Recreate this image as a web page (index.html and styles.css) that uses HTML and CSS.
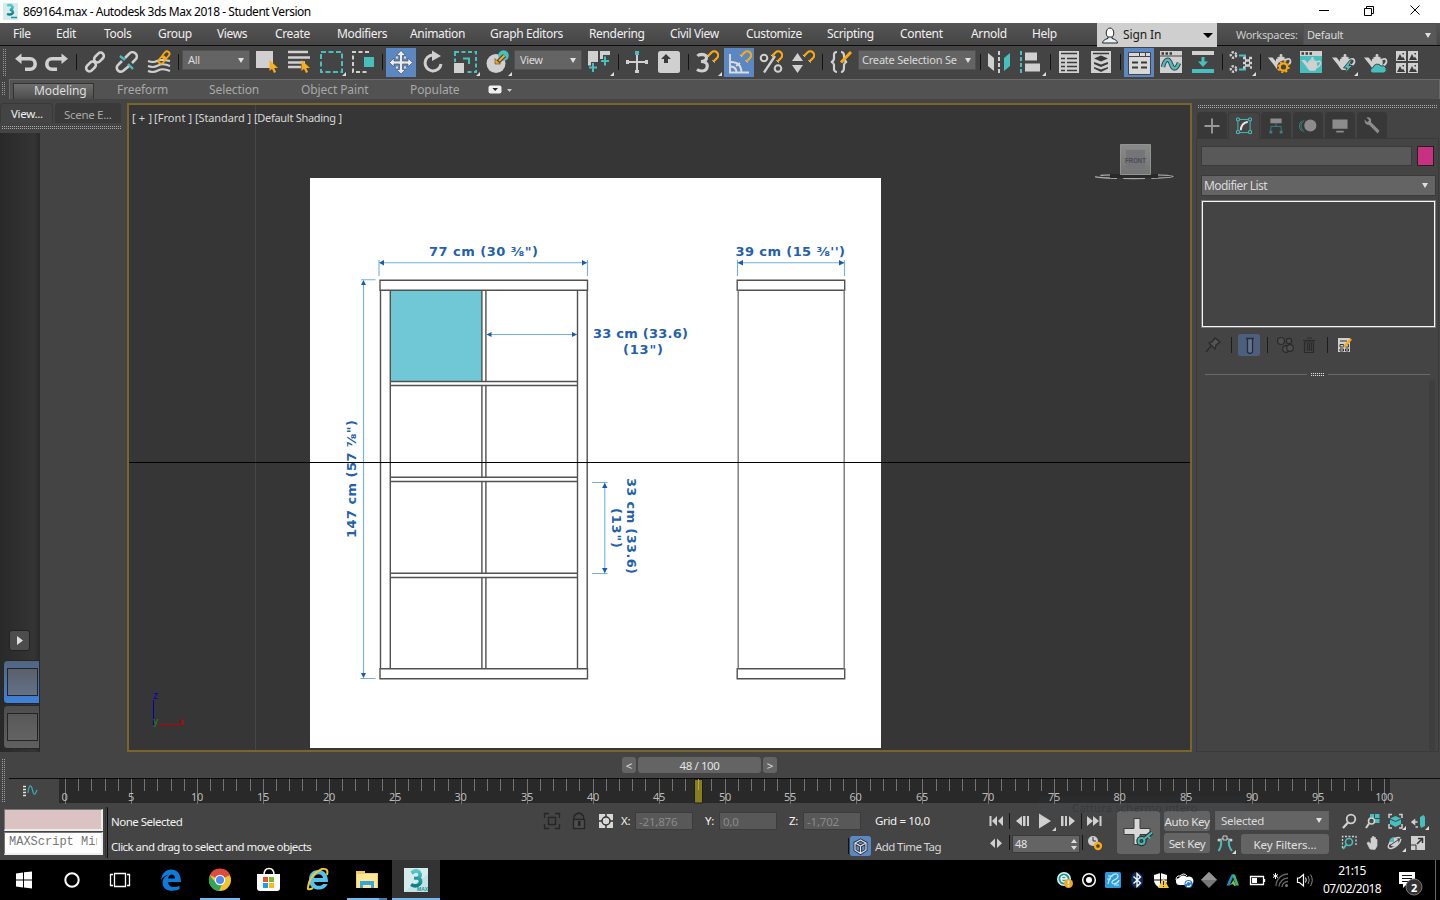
FILE: index.html
```html
<!DOCTYPE html>
<html lang="en">
<head>
<meta charset="utf-8">
<title>869164.max - Autodesk 3ds Max 2018 - Student Version</title>
<link rel="stylesheet" href="styles.css">
</head>
<body>
<svg class="defs" width="0" height="0">
  <defs>
    <linearGradient id="dteal" x1="0" y1="0" x2="0" y2="1"><stop offset="0" stop-color="#56c8cc"/><stop offset="1" stop-color="#0b7f86"/></linearGradient>
    <linearGradient id="cube" x1="0" y1="0" x2="0" y2="1"><stop offset="0" stop-color="#8a8a8a"/><stop offset="1" stop-color="#747474"/></linearGradient>
    <symbol id="max3" viewBox="0 0 24 24"><rect width="24" height="24" fill="#d6ecec"/><path d="M0 24L24 6V24Z" fill="#c2e2e3"/><path d="M7.500 5Q12 1.500 15 4Q17.500 7.500 14.500 10Q18 12.500 15.500 16Q12 19.500 7 16.500" fill="none" stroke="url(#dteal)" stroke-width="3.600"/><path d="M10 10.200H14" stroke="#1d9aa0" stroke-width="3"/><text x="13" y="23" class="maxtag">MAX</text></symbol>
    <symbol id="cursor" viewBox="0 0 9 13"><path d="M.5 0V11L3 8.800L5 13L7 12L5.200 8H9Z" fill="#fbae1c"/></symbol>
    <symbol id="magnet" viewBox="0 0 13 13"><path d="M2 6L5.500 2.500A3.800 3.800 0 0 1 11 8L7.500 11.500" fill="none" stroke="#fba90f" stroke-width="2.200"/><path d="M.8 4.800L3.200 7.200M6.300 10.300L8.700 12.700" stroke="#e8c27a" stroke-width="1"/></symbol>
    <symbol id="pot" viewBox="0 0 24 18"><path d="M0 3.500H4.500L8 7.500V5Q13 2.500 18 5Q20 10 16.500 16H10Q8 14.500 6 11Z" fill="#d0d0d0"/><path d="M8.500 4Q13 .5 17.500 4Z" fill="#d0d0d0"/><circle cx="13" cy="1.500" r="1.400" fill="#d0d0d0"/><path d="M18 5.500Q22.500 3.500 22.500 7.500Q22 11 17 12.500" fill="none" stroke="#d0d0d0" stroke-width="1.800"/></symbol>
    <symbol id="pic" viewBox="0 0 10 10"><rect width="10" height="10" fill="#d0d0d0"/><path d="M1 9L4 3L6 7L7 5.500L9 9Z" fill="#3a3a3a"/><rect x="6.500" y="2" width="1.500" height="1.500" fill="#3a3a3a"/></symbol>
  </defs>
</svg>

<header class="title">
  <svg class="app-ico" width="15" height="17" viewBox="0 0 15 17"><rect width="15" height="17" fill="#d6ecec"/><path d="M4 2.500Q8 1 9.500 3.500Q10 6 7 6.800Q10.500 7.500 9.800 10Q8 12.500 4 11" fill="none" stroke="url(#dteal)" stroke-width="2.400"/><path d="M8 14.500H14" stroke="#119ca3" stroke-width="1.500"/></svg>
  <span class="title-text">869164.max - Autodesk 3ds Max 2018 - Student Version</span>
  <svg class="win-btns" width="110" height="20" viewBox="1315 0 110 20" fill="none" stroke="#000"><path d="M1319 10.500H1329M1364.500 8.500H1371.500V15.500H1364.500ZM1366.500 8V6.500H1373.500V13.500H1372M1410.500 5.500L1419.500 14.500M1419.500 5.500L1410.500 14.500"/></svg>
</header>

<nav class="menu">
  <span>File</span><span>Edit</span><span>Tools</span><span>Group</span><span>Views</span><span>Create</span><span>Modifiers</span><span>Animation</span><span>Graph Editors</span><span>Rendering</span><span>Civil View</span><span>Customize</span><span>Scripting</span><span>Content</span><span>Arnold</span><span>Help</span>
  <div class="signin">
    <svg width="16" height="17" viewBox="0 0 16 17"><ellipse cx="8" cy="6" rx="3.800" ry="5" fill="#fff" stroke="#222"/><path d="M.5 16Q1 12.500 6 11.500V10H10V11.500Q15 12.500 15.500 16Z" fill="#e6f0f5" stroke="#222"/></svg>
    <b>Sign In</b>
    <svg width="10" height="5" viewBox="0 0 10 5"><path d="M0 0H10L5 5Z"/></svg>
  </div>
  <div class="ws"><span>Workspaces:</span><div class="combo ws-combo">Default<i></i></div></div>
</nav>

<div class="toolbar">
  <div class="grip"></div>
  <svg class="ic" viewBox="0 0 32 32"><path d="M12.500 7.500V18L6 12.800Z" fill="#d0d0d0"/><path d="M11 12.800H21A5.200 5.200 0 0 1 21 23.200H16" fill="none" stroke="#d0d0d0" stroke-width="3.600"/></svg>
  <svg class="ic" viewBox="0 0 32 32"><path d="M20.500 7.500V18L27 12.800Z" fill="#d0d0d0"/><path d="M22 12.800H11A5.200 5.200 0 0 0 11 23.200H16" fill="none" stroke="#d0d0d0" stroke-width="3.600"/></svg>
  <u></u>
  <svg class="ic" viewBox="0 0 32 32"><g fill="none" stroke="#d0d0d0" stroke-width="2.600"><rect x="-5.500" y="-3.300" width="11" height="6.600" rx="3.300" transform="translate(20 11.500) rotate(-45)"/><rect x="-5.500" y="-3.300" width="11" height="6.600" rx="3.300" transform="translate(12 20.500) rotate(-45)"/></g></svg>
  <svg class="ic" viewBox="0 0 32 32"><path d="M14 12L18 8A3.500 3.500 0 0 1 25 13L21 17M11 15L7.500 18.500A3.500 3.500 0 0 0 12 25L18 20" fill="none" stroke="#d0d0d0" stroke-width="2.600"/><path d="M9 10L14 14M17 18L22 23" stroke="#46c0be" stroke-width="2.400"/></svg>
  <svg class="ic" viewBox="0 0 32 32"><path d="M5 15Q10 17 14 15T27 15M5 20Q10 22 15 19.500T27 20M5 25Q10 27 15 24.500T27 25" fill="none" stroke="#d0d0d0" stroke-width="2"/><g fill="none" stroke="#fba90f" stroke-width="1.800"><rect x="-4" y="-2.500" width="8" height="5" rx="2.500" transform="translate(23 9) rotate(-50)"/><rect x="-4" y="-2.500" width="8" height="5" rx="2.500" transform="translate(19 14) rotate(-50)"/></g></svg>
  <u></u>
  <div class="combo c1">All<i></i></div>
  <svg class="ic" viewBox="0 0 32 32"><rect x="5" y="5" width="17" height="17" fill="#d0d0d0"/><use href="#cursor" x="18" y="14" width="9" height="13"/></svg>
  <svg class="ic" viewBox="0 0 32 32"><path d="M5 6H25M5 11.500H27M5 16.500H22M5 21H18" stroke="#d0d0d0" stroke-width="2.300"/><use href="#cursor" x="18" y="14" width="9" height="13"/></svg>
  <svg class="ic" viewBox="0 0 32 32"><rect x="6" y="6" width="21" height="20" fill="none" stroke="#46c0be" stroke-width="2" stroke-dasharray="5 2.500"/><path d="M31 26V30H27Z" fill="#ddd"/></svg>
  <svg class="ic" viewBox="0 0 32 32"><path d="M22 6H6V26H22" fill="none" stroke="#d0d0d0" stroke-width="2" stroke-dasharray="4 2.500"/><path d="M17 11H27V21H17Z" fill="#46c0be"/></svg>
  <u></u>
  <svg class="ic on" viewBox="0 0 32 32"><path d="M16 4.500L20.500 9.500H17.500V15H23V12L27.500 16.500L23 21V18H17.500V23.500H20.500L16 28L11.500 23.500H14.500V18H9V21L4.500 16.500L9 12V15H14.500V9.500H11.500Z" fill="#ececec" stroke="#4a5260" stroke-width=".7"/><path d="M11 11.500H13M19 11.500H21M11 21.500H13M19 21.500H21" stroke="#ddd" stroke-width="2"/></svg>
  <svg class="ic" viewBox="0 0 32 32"><path d="M16 9A8 8 0 1 0 24 18" fill="none" stroke="#d0d0d0" stroke-width="3"/><path d="M15 4.500L24 10L15 15Z" fill="#d0d0d0"/></svg>
  <svg class="ic" viewBox="0 0 32 32"><rect x="6" y="6" width="21" height="20" fill="none" stroke="#46c0be" stroke-width="2" stroke-dasharray="4 2.500"/><path d="M4 16H16V28H4Z" fill="#444"/><path d="M5 17H15V27H5Z" fill="#d0d0d0"/><path d="M14 12.500H20V18" fill="none" stroke="#46c0be" stroke-width="2"/><path d="M31 26V30H27Z" fill="#ddd"/></svg>
  <svg class="ic" viewBox="0 0 32 32"><circle cx="15" cy="17.500" r="9.500" fill="#d0d0d0"/><circle cx="22.500" cy="9.500" r="5.300" fill="#46c0be"/><path d="M23.500 9.500L17 16" stroke="#444" stroke-width="4.500"/><path d="M23.500 9.500L18 15" stroke="#fba90f" stroke-width="2.200"/><path d="M14 18V12.500L19.500 18Z" fill="#fba90f" stroke="#444" stroke-width=".6"/><path d="M31 26V30H27Z" fill="#ddd"/></svg>
  <div class="combo c1 c1b">View<i></i></div>
  <svg class="ic" viewBox="0 0 32 32"><path d="M4 5H14V16H9L8 21H4ZM16 5H26V9H19V15H16Z" fill="#d0d0d0"/><path d="M9 16V27M4 21.500H14M21 9.500V20.500M16 15H26" stroke="#444" stroke-width="4"/><path d="M9 17V26M5 21.500H13M21 10.500V19.500M17 15H25" stroke="#46c0be" stroke-width="2"/><path d="M30 26V30H26Z" fill="#ddd"/></svg>
  <u class="s5"></u>
  <svg class="ic" viewBox="0 0 32 32"><path d="M5 16H27M16 9V27" stroke="#d0d0d0" stroke-width="2"/><path d="M6.500 14V18M25.500 14V18M14 25.500H18" stroke="#d0d0d0" stroke-width="3"/><path d="M14 5H18V9H14Z" fill="#46c0be"/></svg>
  <svg class="ic" viewBox="0 0 32 32"><rect x="5" y="5" width="22" height="22" rx="2.500" fill="#d0d0d0"/><path d="M13 8L18 13H15V17H11V13H8Z" fill="#3a3a3a"/></svg>
  <u></u>
  <svg class="ic" viewBox="0 0 32 32"><path d="M6.500 10Q8 8.300 11 8.300Q15.500 8.500 15.500 11.800Q15.300 15.300 10 15.500Q16.500 15.700 16.300 20Q16 24.800 11 25Q8 25 6 23.500" fill="none" stroke="#d0d0d0" stroke-width="3.200"/><use href="#magnet" x="15" y="4" width="13" height="13"/><path d="M31 26V30H27Z" fill="#ddd"/></svg>
  <svg class="ic on" viewBox="0 0 32 32"><path d="M7 8V26.500H26M8 16Q18 16 18.500 26M8 20.500Q13 21 13.500 26M13 20L17 17" fill="none" stroke="#dcdcdc" stroke-width="1.900"/><use href="#magnet" x="16" y="4" width="13" height="13"/></svg>
  <svg class="ic" viewBox="0 0 32 32"><circle cx="9" cy="12" r="3.300" fill="none" stroke="#d0d0d0" stroke-width="2"/><circle cx="23" cy="22.500" r="3.300" fill="none" stroke="#d0d0d0" stroke-width="2"/><path d="M20 10L9 26.500" stroke="#d0d0d0" stroke-width="2.300"/><use href="#magnet" x="15" y="4" width="13" height="13"/></svg>
  <svg class="ic" viewBox="0 0 32 32"><path d="M5 15L10.500 7L16 15ZM5 19L10.500 27L16 19Z" fill="#d0d0d0"/><use href="#magnet" x="15" y="4" width="13" height="13"/></svg>
  <u></u>
  <svg class="ic br" viewBox="0 0 32 32"><path d="M11 6Q7.500 6 8 10Q8.500 15.500 5 16Q8.500 16.500 8 21Q7.500 26 11 26M15 6Q18 6 18 10Q18 15.500 21 16Q17.500 16.500 18 21Q18 26 15 26" fill="none" stroke="#d0d0d0" stroke-width="2.200"/><path d="M25 6L15 16.500" stroke="#fba90f" stroke-width="3"/></svg>
  <div class="combo c2">Create Selection Se<i></i></div>
  <u></u>
  <svg class="ic" viewBox="0 0 32 32"><path d="M5 7L11 12V25L5 20Z" fill="#d0d0d0"/><path d="M27 7L21 12V25L27 20Z" fill="#46c0be"/><path d="M16 5V28" stroke="#d0d0d0" stroke-width="2" stroke-dasharray="4 2"/></svg>
  <svg class="ic" viewBox="0 0 32 32"><path d="M6 5V27" stroke="#46c0be" stroke-width="2" stroke-dasharray="4 2"/><path d="M10 6.500H22V14.500H10ZM10 17.500H25V25.500H10Z" fill="#d0d0d0"/><path d="M31 26V30H27Z" fill="#ddd"/></svg>
  <u></u>
  <svg class="ic" viewBox="0 0 32 32"><path d="M6 5H26V27H6Z" fill="#d0d0d0"/><path d="M8 7.500H24M8 12.500H12M14 12.500H24M8 16.500H12M14 16.500H24M8 20.500H12M14 20.500H24M8 24.500H12M14 24.500H24" stroke="#3a3a3a" stroke-width="1.700"/></svg>
  <svg class="ic" viewBox="0 0 32 32"><path d="M6 5H26V27H6Z" fill="#d0d0d0"/><path d="M8 7.500H24" stroke="#3a3a3a" stroke-width="1.500"/><path d="M9 12.500L16 9.500L23 12.500L16 15.500ZM9 16L16 18.500L23 16V18L16 21L9 18ZM9 21L16 23.500L23 21V22.500L16 26L9 22.500Z" fill="#3a3a3a"/></svg>
  <u></u>
  <svg class="ic on" viewBox="0 0 32 32"><path d="M5.500 6.500H27.500V28.500H5.500Z" fill="#d8d8d8" stroke="#444"/><path d="M5.500 10.500H16.500V6.500M16.500 10.500H27.500M22.500 6.500V10.500" fill="none" stroke="#444"/><path d="M9 16.500H15M18 16.500H24M9 21.500H15M18 21.500H24" stroke="#3a3a3a" stroke-width="2"/></svg>
  <svg class="ic" viewBox="0 0 32 32"><path d="M5 5H27V27H5Z" fill="#d0d0d0"/><path d="M5 10H27" stroke="#444"/><path d="M6.500 7.500H17" stroke="#3a3a3a" stroke-width="2.500" stroke-dasharray="2.500 1.500"/><path d="M8 21C10 12 14 12 16 18S21 24 24 17" fill="none" stroke="#444" stroke-width="4.500"/><path d="M8 21C10 12 14 12 16 18S21 24 24 17" fill="none" stroke="#46c0be" stroke-width="2.500"/></svg>
  <svg class="ic" viewBox="0 0 32 32"><path d="M5 5H27V9H5Z" fill="#d0d0d0"/><path d="M5 23H27V27H5ZM14.500 11H17.500V15.500H21L16 21L11 15.500H14.500Z" fill="#46c0be"/></svg>
  <u></u>
  <svg class="ic" viewBox="0 0 32 32"><path d="M14 9.500H20V12M14 23.500H20V20" fill="none" stroke="#46c0be" stroke-width="2"/><g fill="none" stroke="#d0d0d0" stroke-width="2.400"><circle cx="8.500" cy="9" r="2.700" stroke-dasharray="2.200 1.300"/><circle cx="8.500" cy="23" r="2.700" stroke-dasharray="2.200 1.300"/><path d="M18 12H21M24 12H27M20 14.500H25M18 17H21M24 17H27M20 19.500H25M18 21.500H20M25 21.500H27"/></g><path d="M31 26V30H27Z" fill="#ddd"/></svg>
  <u></u>
  <svg class="ic" viewBox="0 0 32 32"><use href="#pot" x="5" y="8" width="24" height="18"/><circle cx="20.500" cy="21" r="6.500" fill="#444"/><circle cx="20.500" cy="21" r="3.700" fill="none" stroke="#fba90f" stroke-width="2.200"/><circle cx="20.500" cy="21" r="5.400" fill="none" stroke="#fba90f" stroke-width="1.500" stroke-dasharray="2.100 2.100"/></svg>
  <svg class="ic" viewBox="0 0 32 32"><path d="M5 5H27V27H5Z" fill="#46c0be"/><path d="M5 5H27V10H5Z" fill="#d0d0d0"/><path d="M6.500 7.500H17" stroke="#3a3a3a" stroke-width="2.500" stroke-dasharray="2.500 1.500"/><use href="#pot" x="6" y="11" width="21" height="15.500"/></svg>
  <svg class="ic" viewBox="0 0 32 32"><use href="#pot" x="5" y="8" width="24" height="18"/><path d="M23 14L16.500 22H20L17.500 28L25.500 19.500H22L25 14Z" fill="#46c0be" stroke="#444"/><path d="M31 26V30H27Z" fill="#ddd"/></svg>
  <svg class="ic" viewBox="0 0 32 32"><use href="#pot" x="5" y="8" width="24" height="18"/><path d="M13 27A3 3 0 0 1 14 21.500A4.500 4.500 0 0 1 22 20A3.500 3.500 0 0 1 25 27Z" fill="#46c0be" stroke="#444"/></svg>
  <svg class="ic" viewBox="0 0 32 32"><use href="#pic" x="5" y="5" width="10" height="10"/><use href="#pic" x="17" y="5" width="10" height="10"/><use href="#pic" x="5" y="17" width="10" height="10"/><use href="#pic" x="17" y="17" width="10" height="10"/></svg>
</div>

<div class="ribbon">
  <div class="grip rg"></div>
  <div class="rib">
    <span class="act">Modeling</span><span class="r2">Freeform</span><span class="r3">Selection</span><span class="r4">Object Paint</span><span class="r5">Populate</span>
    <svg width="26" height="10" viewBox="0 0 26 10"><rect x=".5" y=".5" width="13" height="8" rx="2" fill="#eee"/><path d="M4.500 3H10L7.200 6Z" fill="#222"/><path d="M19 4H24L21.500 7Z" fill="#ccc"/></svg>
  </div>
</div>

<main class="main">
  <aside class="left">
    <div class="ltabs"><span class="lt on1">View...</span><span class="lt">Scene E...</span></div>
    <div class="dots"></div>
    <div class="strip">
      <div class="play"><svg width="6" height="9" viewBox="0 0 6 9"><path d="M0 0L6 4.500L0 9Z" fill="#ddd"/></svg></div>
      <div class="vp blue"><div></div></div>
      <div class="vp"><div></div></div>
    </div>
  </aside>

  <section class="view">
    <svg width="1061" height="645" viewBox="129 105 1061 645">
      <path d="M255.500 105V750" stroke="#464646"/>
      <g class="vlabel"><text x="132" y="122" textLength="20">[ + ]</text><text x="154" y="122" textLength="38">[Front ]</text><text x="195" y="122" textLength="56">[Standard ]</text><text x="254" y="122" textLength="88">[Default Shading ]</text></g>
      <rect x="310" y="178" width="571" height="570" fill="#fff"/>
      <rect x="390" y="290" width="92" height="91" fill="#70c7d6"/>
      <g fill="none" stroke="#515151" stroke-width="1.400">
        <path d="M380 280.300H587.500V290.300H380ZM380 668.800H587.500V678.700H380ZM380.500 290V669M390.300 290V669M577.500 290V669M587.200 290V669"/>
        <path d="M390 381.500H577.500M390 385.500H577.500M390 477.300H577.500M390 481.500H577.500M390 573.300H577.500M390 577.500H577.500M481.900 290V381M485.900 290V381M481.900 386V477M485.900 386V477M481.900 482V573M485.900 482V573M481.900 578V669M485.900 578V669"/>
        <path d="M737.200 280.300H844.700V290.300H737.200ZM737.200 668.800H844.700V678.700H737.200Z"/>
        <path d="M738.200 290V669M844.200 290V669" stroke="#777"/>
      </g>
      <path d="M379 260V276M587.500 260V276M380 262.800H587M361 279.800H375.500M360.500 678.500H375.500M363.500 281V677M487 334.500H577M592 482.500H607.500M592 573.500H607.500M604.800 483V573M737.500 260V276M844.500 260V276M738 262.800H844" stroke="#75b0dc" stroke-width="1.100"/>
      <path d="M379 262.800L384 260V265.500ZM587 262.800L582 260V265.500ZM363.500 280L361 285H366ZM363.500 678L361 673H366ZM486.500 334.500L491.500 332V337ZM577 334.500L572 332V337ZM604.800 483L602 488H607.500ZM604.800 573L602 568H607.500ZM737.500 262.800L743 260V265.500ZM844.500 262.800L839 260V265.500Z" fill="#1a5cab"/>
      <g class="dim">
        <text x="429" y="256" textLength="109">77 cm (30 ⅜")</text>
        <text x="735.500" y="256" textLength="109.500">39 cm (15 ⅜'')</text>
        <text x="593" y="338" textLength="95">33 cm (33.6)</text>
        <text x="623" y="353.500" textLength="40">(13")</text>
        <text transform="translate(356 538) rotate(-90)" textLength="118">147 cm (57 ⅞")</text>
        <text transform="translate(627 478) rotate(90)" textLength="96">33 cm (33.6)</text>
        <text transform="translate(611.500 508) rotate(90)" textLength="40">(13")</text>
      </g>
      <path d="M129 462.500H1190" stroke="#000"/>
      <path d="M153.500 700V725" stroke="#0000b4"/><path d="M158 724.500H182" stroke="#c00000"/>
      <text x="153" y="699" class="ax" fill="#0000c8">z</text><text x="153" y="725" class="ax" fill="#1a8f1a">y</text><text x="179" y="725" class="ax" fill="#c00000">x</text>
      <ellipse cx="1134" cy="176.500" rx="39" ry="2" fill="none" stroke="#a5a8ad" stroke-width="1.300" stroke-dasharray="22 6"/>
      <rect x="1110" y="174" width="48" height="4" fill="#292929"/>
      <path d="M1120.500 144.500H1150.500V174.500H1120.500Z" fill="url(#cube)" stroke="#929292"/><rect x="1126" y="150" width="19" height="19" fill="#737578"/>
      <text x="1125" y="163" textLength="21" lengthAdjust="spacingAndGlyphs" class="cubet">FRONT</text>
    </svg>
  </section>

  <aside class="right">
    <div class="dots rd"></div>
    <div class="tabs">
      <svg viewBox="0 0 32 27"><path d="M8 14H24M16 6V22" stroke="#9a9a9a" stroke-width="2"/></svg>
      <svg class="cur" viewBox="0 0 32 27"><path d="M9.500 6.500H22.500V20.500H9.500Z" fill="none" stroke="#46c0be"/><path d="M8 5h3v3h-3zM21 5h3v3h-3zM8 18.500h3v3h-3zM21 18.500h3v3h-3z" fill="#444" stroke="#46c0be"/><path d="M12.500 18Q13 10.500 20 9" fill="none" stroke="#e5e5e5" stroke-width="2"/></svg>
      <svg viewBox="0 0 32 27"><path d="M10 6H22V11H10Z" fill="#8c8c8c"/><path d="M16 11V14M10.500 19V14.500H21.500V19" fill="none" stroke="#3b8282"/><path d="M9 19H12V22H9ZM20 19H23V22H20Z" fill="#3b8282"/></svg>
      <svg viewBox="0 0 32 27"><path d="M12 8A7 7 0 0 0 12 20M9.500 8.500A7 7 0 0 0 9.500 19.500" fill="none" stroke="#3b8282"/><circle cx="18.500" cy="13.500" r="6.500" fill="#8c8c8c"/></svg>
      <svg viewBox="0 0 32 27"><path d="M8 7H24V17H8ZM12 19H20V21H12Z" fill="#8c8c8c"/></svg>
      <svg viewBox="0 0 32 27"><path d="M8 7L11 10L13 8L10 5Q14 4 15 7L15 10L24 19L22 22L13 13Q8 13 8 7Z" fill="#8c8c8c"/></svg>
    </div>
    <div class="panel">
      <div class="nm"><div class="name"></div><div class="swatch"></div></div>
      <div class="combo mod">Modifier List<i></i></div>
      <div class="stack"></div>
      <svg class="modicons" width="230" height="24" viewBox="1201 333 230 24"><g fill="none" stroke="#2a2a2a" stroke-width="1.300"><path d="M1206 352L1211 346M1209 343L1215 349L1216 345L1220 342L1215 338L1212 342Z" fill="#555"/></g><path d="M1231.500 337V353M1267.500 337V353M1327.500 337V353" stroke="#1c1c1c"/><rect x="1238" y="334" width="22" height="22" rx="2.500" fill="#4d5f7d"/><path d="M1246 338.500H1254M1247.500 339V352Q1250 355 1252.500 352V339" fill="#64748c" stroke="#262c35" stroke-width="1.300"/><g fill="#4e4e4e" stroke="#2a2a2a" stroke-width="1.200"><circle cx="1281" cy="341" r="3.500"/><circle cx="1289" cy="341" r="2.700"/><circle cx="1286" cy="349" r="3.300"/><circle cx="1290" cy="348" r="3.300"/><path d="M1304.500 342H1313.500V352.500H1304.500ZM1303 340.500H1315.500M1307 338H1312M1307.500 343V351M1309.500 343V351M1311.500 343V351" fill="none"/></g><path d="M1338 338H1350V352H1338Z" fill="#d0d0d0"/><path d="M1340 341H1347M1340 344.500H1343.500V347H1340ZM1345.500 344.500H1348.500V347H1345.500ZM1340 349H1343.500V351H1340ZM1345.500 349H1348.500V351H1345.500Z" fill="none" stroke="#333"/><path d="M1351 339L1344 347" stroke="#fba90f" stroke-width="2.500"/></svg>
      <div class="divide"><s></s><em></em><s></s></div>
      <div class="thumb"></div>
    </div>
  </aside>
</main>

<div class="slider"><div class="sb">&lt;</div><div class="sv">48 / 100</div><div class="sb">&gt;</div></div>

<div class="track">
  <svg width="1440" height="53" viewBox="0 751 1440 53">
    <path d="M4.500 759V802M2.500 759V802" stroke="#a0a0a0" stroke-dasharray="1 1"/>
    <path d="M59 779H1390V803H59Z" fill="#292929"/><path d="M9 778.500H1440" stroke="#0c0c0c"/>
    <path d="M23 786.500H26M23 789.500H26M23 792.500H26M23 795.500H26" stroke="#ddd" stroke-width="1.300"/><path d="M28 793C29 784 31 784 32.500 790S35 795 37 790" fill="none" stroke="#3aa9a8" stroke-width="1.300"/>
    <g shape-rendering="crispEdges" fill="none" stroke="#747474"><path d="M65 785H1385" stroke-width="12" stroke-dasharray="1 12.190"/><path d="M65 791.500H1385" stroke-width="25" stroke-dasharray="1 64.950"/></g>
    <g class="nums"><text x="64.500" y="801">0</text><text x="131" y="801">5</text><text x="197" y="801">10</text><text x="263" y="801">15</text><text x="329" y="801">20</text><text x="395" y="801">25</text><text x="460.500" y="801">30</text><text x="527" y="801">35</text><text x="593" y="801">40</text><text x="659" y="801">45</text><text x="725" y="801">50</text><text x="790" y="801">55</text><text x="855.500" y="801">60</text><text x="922" y="801">65</text><text x="988" y="801">70</text><text x="1054" y="801">75</text><text x="1119.500" y="801">80</text><text x="1186" y="801">85</text><text x="1252" y="801">90</text><text x="1318" y="801">95</text><text x="1384" y="801">100</text></g>
    <path d="M694.500 779.500H702.500V803H694.500Z" fill="#857d1f" stroke="#1f1f1f"/><path d="M698.500 779V790" stroke="#b3a836"/>
  </svg>
</div>

<div class="status">
  <div class="script"><div class="pink"></div><div class="listener"><span>MAXScript Mini</span></div></div>
  <div class="vline"></div>
  <div class="msg"><span class="none">None Selected</span><span class="hint">Click and drag to select and move objects</span></div>
  <div class="coords">
    <div class="row">
      <svg width="73" height="20" viewBox="542 811 73 20"><g fill="none" stroke="#252525" stroke-width="1.300"><path d="M548.500 817.500H555.500V824.500H548.500ZM544.500 818V813.500H549M555 813.500H559.500V818M559.500 824V828.500H555M549 828.500H544.500V824"/><path d="M574 820V816Q579 810 583.500 816V820"/><rect x="573.500" y="819.500" width="11" height="9" fill="#4e4e4e"/></g><path d="M578 821H580.500V826H578Z" fill="#222"/><path d="M599 814H613V828H599Z" fill="#d8d8d8"/><circle cx="606" cy="821" r="4" fill="none" stroke="#333" stroke-width="1.500"/><path d="M606 814V817M606 825V828M599 821H602M610 821H613" stroke="#333" stroke-width="1.500"/></svg>
      <span class="ax1">X:</span><div class="fld">-21,876</div><span class="ax2">Y:</span><div class="fld">0,0</div><span class="ax2">Z:</span><div class="fld">-1,702</div><span class="grid10">Grid = 10,0</span>
    </div>
    <div class="row row2">
      <svg width="24" height="22" viewBox="848 835 24 22"><path d="M848.500 838V854" stroke="#111"/><rect x="850" y="836" width="21" height="20" rx="2.500" fill="#5b87c3"/><path d="M860.500 840L866 843V850L860.500 853.500L855 850V843ZM855 843L860.500 846L866 843M860.500 846V853" fill="none" stroke="#2b3440" stroke-width="3"/><path d="M860.500 840L866 843V850L860.500 853.500L855 850V843ZM855 843L860.500 846L866 843M860.500 846V853" fill="none" stroke="#e0e0e0" stroke-width="1.200"/></svg>
      <span class="att">Add Time Tag</span>
    </div>
  </div>
  <div class="playback">
    <svg width="118" height="27" viewBox="986 806 118 27" fill="#d0d0d0"><path d="M989.500 816H991.500V826H989.500ZM997 816V826L992 821ZM1003 816V826L998 821ZM1022 816V826L1016 821ZM1023 816H1025.500V826H1023ZM1027 816H1029V826H1027ZM1039 813.500L1051 821L1039 828.500ZM1061 816H1063.500V826H1061ZM1065 816H1067V826H1065ZM1069 816L1075 821L1069 826ZM1087 816L1093 821L1087 826ZM1093 816L1099 821L1093 826ZM1099.500 816H1101.500V826H1099.500ZM1056 827V831H1052Z"/><path d="M1009.500 813V829M1081.500 813V829" stroke="#161616"/></svg>
    <div class="prow"><svg width="26" height="20" viewBox="986 833 26 20"><path d="M995 838.500V848L990 843.200ZM997 838.500V848L1002 843.200Z" fill="#d0d0d0"/><path d="M1009.500 835V850" stroke="#161616"/></svg><div class="frame">48<svg width="6" height="11" viewBox="0 0 6 11"><path d="M0 4L3 0L6 4ZM0 7L3 11L6 7Z" fill="#ddd"/></svg></div><svg width="24" height="20" viewBox="1080 833 24 20"><path d="M1082.500 835V850" stroke="#161616"/><circle cx="1093" cy="841" r="5" fill="#d0d0d0"/><path d="M1093 837V841H1096" fill="none" stroke="#333"/><circle cx="1098" cy="846" r="3" fill="#444" stroke="#fba90f" stroke-width="2.300"/></svg></div>
  </div>
  <svg class="bigkey" width="43" height="43" viewBox="0 0 43 43"><path d="M17 7.500H23V17.500H33V23.500H23V33.500H17V23.500H7V17.500H17Z" fill="#d8d8d8" stroke="#3c3c3c"/><g fill="none" stroke="#333" stroke-width="4.500"><circle cx="24.500" cy="30" r="3"/><path d="M27 28L35 21.500"/></g><g fill="none" stroke="#46b9b7" stroke-width="2"><circle cx="24.500" cy="30" r="3"/><path d="M27 28L35 21.500M31 25L33 27.500"/></g></svg>
  <div class="keys"><div class="btn">Auto Key</div><div class="btn">Set Key</div></div>
  <div class="filt"><div class="combo sel">Selected<i></i></div><div class="prow"><svg width="26" height="22" viewBox="1215 833 26 22"><path d="M1218.500 851Q1222 846 1221 840M1232 851Q1228 846 1229 840" fill="none" stroke="#46c0be" stroke-width="2"/><path d="M1218 840L1225 838L1232 840" fill="none" stroke="#ccc"/><path d="M1223 836H1227V840H1223Z" fill="#444" stroke="#ccc"/><circle cx="1219" cy="840" r="1.500" fill="#ccc"/><circle cx="1231" cy="840" r="1.500" fill="#ccc"/><path d="M1236 850V854H1232Z" fill="#ddd"/></svg><div class="btn kf">Key Filters...</div></div></div>
  <svg class="navs" width="90" height="48" viewBox="1340 809 90 48">
    <circle cx="1351" cy="819" r="4.300" fill="none" stroke="#d0d0d0" stroke-width="1.800"/><path d="M1348 822.500L1343 828" stroke="#d0d0d0" stroke-width="2.300"/>
    <path d="M1370 814H1374V818H1370ZM1375 814H1379.500V818H1375ZM1375 819H1379.500V823H1375Z" fill="#46c0be"/><circle cx="1371.500" cy="821" r="3" fill="#444" stroke="#d0d0d0" stroke-width="1.600"/><path d="M1369 823.500L1366 828" stroke="#d0d0d0" stroke-width="2"/>
    <path d="M1389 818V814.500H1392M1399 814.500H1402V818M1402 824V828H1399M1392 828H1389V824" fill="none" stroke="#d0d0d0" stroke-width="1.500"/><path d="M1395.500 816L1401 818.500V824L1395.500 827L1390 824V818.500Z" fill="#46c0be"/><path d="M1390 819L1395.500 821.500L1401 819" fill="none" stroke="#345"/><path d="M1406 826V830H1402Z" fill="#ddd"/>
    <path d="M1420 817L1423.500 815L1425 817V826L1421 828L1420 825Z" fill="#46c0be"/><path d="M1417.500 822H1413M1412 822L1414.500 820V824ZM1415.500 827H1418" stroke="#d0d0d0" stroke-width="1.500" fill="#d0d0d0"/><path d="M1429 826V830H1425Z" fill="#ddd"/>
    <path d="M1342.500 848V836.500H1356V846" fill="none" stroke="#d0d0d0" stroke-width="1.300" stroke-dasharray="2 1.500"/><circle cx="1349" cy="842" r="3.500" fill="none" stroke="#46c0be" stroke-width="1.600"/><path d="M1346.500 844.500L1343 849" stroke="#46c0be" stroke-width="2"/>
    <path d="M1370 849L1367 843L1368.500 842L1371 844V838H1372.500V842V836.500H1374V842V837.500H1375.500V842V839.500H1377V846L1375 849.500Z" fill="#d0d0d0" stroke="#d0d0d0" stroke-width=".7"/>
    <ellipse cx="1394.500" cy="843" rx="7.500" ry="3.500" transform="rotate(-40 1394.500 843)" fill="none" stroke="#d0d0d0" stroke-width="1.500"/><circle cx="1394" cy="842" r="4.500" fill="#d0d0d0"/><path d="M1394 837.500V842H1389.500A4.500 4.500 0 0 1 1394 837.500" fill="#46c0be"/><path d="M1389 846L1401 838" stroke="#444"/><path d="M1406 848V852H1402Z" fill="#ddd"/>
    <path d="M1411 836H1425V850H1411Z" fill="#d0d0d0"/><path d="M1411 845H1416V850" fill="none" stroke="#333"/><path d="M1417 844L1422 839M1418 838.500H1422.500V843" fill="none" stroke="#333" stroke-width="1.500"/>
  </svg>
  <div class="ghost">Cattura schermo intero</div>
</div>

<footer class="task">
  <div class="cell"><svg width="48" height="40" viewBox="0 0 48 40"><path d="M16 13.500L23 12.500V19.500H16ZM24 12.300L32 11.500V19.500H24ZM16 20.500H23V27.500L16 26.500ZM24 20.500H32V28.500L24 27.500Z" fill="#fff"/></svg></div>
  <div class="cell"><svg width="48" height="40" viewBox="0 0 48 40"><circle cx="24" cy="20" r="6.700" fill="none" stroke="#fff" stroke-width="2"/></svg></div>
  <div class="cell"><svg width="48" height="40" viewBox="0 0 48 40"><path d="M18.500 13.500H29.500V26.500H18.500ZM17 14.500H14.500V25.500H17M31 14.500H33.500V25.500H31" fill="none" stroke="#fff" stroke-width="1.300"/></svg></div>
  <div class="cell wide"><svg width="49" height="40" viewBox="0 0 49 40"><path d="M17 20C18 13 22 9.500 27 9.500C33 9.500 37 14 37 22H24C24.500 28 32 28 35.500 25.500V29C30 32 18 32 18.500 22C19 18 22 15.500 25 15C21 15 19 17 17 20M24 18.500H31C31 13 25 13 24 18.500" fill="#0c7cdc"/></svg></div>
  <div class="cell wide run"><svg width="49" height="40" viewBox="0 0 49 40"><circle cx="27" cy="20" r="11" fill="#f0c52b"/><path d="M27 20L17 15A11 11 0 0 1 37 15Z" fill="#df4b3c"/><path d="M16.900 15.400A11 11 0 0 0 26 31L30 22L23 23Z" fill="#34a35a"/><path d="M27 9A11 11 0 0 1 36.900 15.200H27Z" fill="#df4b3c"/><circle cx="27" cy="20" r="5.200" fill="#fff"/><circle cx="27" cy="20" r="4" fill="#4c8bf5"/></svg></div>
  <div class="cell wide"><svg width="49" height="40" viewBox="-2 0 49 40"><path d="M20 15Q20 8.500 25 8.500Q30 8.500 30 15" fill="none" stroke="#fff" stroke-width="1.500"/><path d="M13 14H36V28Q36 31 33 31H16Q13 31 13 28Z" fill="#fff"/><path d="M19 17H24V22H19Z" fill="#f0502a"/><path d="M25 17H30V22H25Z" fill="#7fb92c"/><path d="M19 23H24V28H19Z" fill="#12a4e6"/><path d="M25 23H30V28H25Z" fill="#fdb818"/></svg></div>
  <div class="cell wide"><svg width="49" height="40" viewBox="-3 0 49 40"><path d="M15 20C15 13 19 10 24.500 10C31 10 34 15 34 22H20C21 27 28 26.500 29 24H33.500C31 32 15 32 15 20M20 18H29C28.500 13 21 13 20 18" fill="#54c4ef"/><path d="M33 15Q35 8 28 9Q16 14 14 27Q13 31 19 28" fill="none" stroke="#f6c72d" stroke-width="2"/></svg></div>
  <div class="cell wide folder"><svg width="49" height="40" viewBox="-5 0 49 40"><path d="M11 11H20V13H33V28H11Z" fill="#f3cb61"/><path d="M12 14H32V28H12Z" fill="#ffe795"/><path d="M15 28V21H29V28H26V25H18V28Z" fill="#37a6dd"/></svg></div>
  <div class="cell maxc"><svg width="24" height="24"><use href="#max3" width="24" height="24"/></svg></div>
  <svg class="tray" width="270" height="40" viewBox="1050 860 270 40">
    <circle cx="1064" cy="879" r="7" fill="#e6f5f3"/><circle cx="1064" cy="879" r="5.500" fill="#129b96"/><path d="M1061 879H1067Q1066 875.500 1063.500 876Q1060 877 1061.500 880.500Q1063 883 1066 881" fill="none" stroke="#fff" stroke-width="1.500"/><circle cx="1068.500" cy="883.500" r="4.500" fill="#f2a51f"/><path d="M1068.500 880.500V884M1068.500 885V886.500" stroke="#fff" stroke-width="1.500"/>
    <circle cx="1089" cy="880" r="6.300" fill="none" stroke="#fff" stroke-width="1.500"/><circle cx="1089" cy="880" r="3" fill="#fff"/>
    <rect x="1105" y="872" width="16" height="16" rx="1.500" fill="#2a9be0"/><path d="M1108 884C1110 873 1118 872 1118 876S1113 879 1112 882S1118 884 1119 880M1108 876H1113M1107 879H1111M1114 885H1119" fill="none" stroke="#c9ebfb" stroke-width="1.200"/>
    <ellipse cx="1137" cy="880" rx="6" ry="8" fill="#0e2e63"/><path d="M1133.500 876.500L1140.500 883L1137 886.500V873.500L1140.500 877L1133.500 883.500" fill="none" stroke="#fff" stroke-width="1.300"/>
    <path d="M1154 875L1160.500 873L1167 875V881Q1166 886 1160.500 888Q1155 886 1154 881Z" fill="#fff"/><path d="M1160.500 873V888M1154 880H1167" stroke="#000"/><path d="M1163.500 878L1169 888H1158Z" fill="#fcc62e"/><path d="M1163.500 881V885M1163.500 886V887" stroke="#222"/>
    <path d="M1180 885A3.500 3.500 0 0 1 1179 878A5 5 0 0 1 1187 877A4 4 0 0 1 1191 885Z" fill="#fff"/><path d="M1177 881A3 3 0 0 1 1180 876Q1184 872 1187 876" stroke="#fff" fill="none"/><circle cx="1188.500" cy="884" r="4" fill="#2e7bd2"/><path d="M1186 884A2.500 2.500 0 0 1 1190.500 882.500M1191 884.500A2.500 2.500 0 0 1 1187 886" fill="none" stroke="#fff" stroke-width="1.100"/>
    <path d="M1209 872L1217 880L1209 888L1201 880Z" fill="#777"/><path d="M1209 872L1217 880H1201Z" fill="#959595"/>
    <path d="M1226.500 885.500L1231.500 874.500H1234L1229.500 885.500Z" fill="#248ed7"/><path d="M1232 874.500H1235L1239 885.500H1236Z" fill="#35b77e"/><path d="M1229.500 885.500Q1232 883 1233.500 880L1236 885.500L1234.500 886L1232.500 884Z" fill="#86c440"/>
    <path d="M1250.500 876.500H1263.500V884.500H1250.500ZM1264.500 879V882" fill="none" stroke="#fff" stroke-width="1.300"/><path d="M1252 878H1257V883H1252Z" fill="#fff"/>
    <path d="M1275.500 873V879M1273 874.500L1278 877.500M1278 874.500L1273 877.500" stroke="#fff"/><g fill="none" stroke="#686868" stroke-width="1.300"><path d="M1276 886A12 12 0 0 1 1288 874M1279 886.500A9 9 0 0 1 1288 878M1282 887A6 6 0 0 1 1288 881.500"/></g><circle cx="1286.500" cy="885.500" r="1.500" fill="#777"/>
    <path d="M1297.500 878H1299.500L1303.500 874.500V886L1299.500 882.500H1297.500Z" fill="none" stroke="#fff" stroke-width="1.200"/><path d="M1305.500 877.500Q1307 880 1305.500 882.500" fill="none" stroke="#fff"/><path d="M1308 876Q1310.500 880 1308 884M1310.500 874.500Q1314 880 1310.500 886" fill="none" stroke="#888"/>
  </svg>
  <div class="clock"><span>21:15</span><span>07/02/2018</span></div>
  <svg class="note" width="37" height="40" viewBox="1390 860 37 40"><path d="M1399 872H1415V884H1407L1403 888V884H1399Z" fill="#fff"/><path d="M1402 875.500H1412M1402 878.500H1412M1402 881.500H1409" stroke="#111"/><circle cx="1414" cy="887" r="8" fill="#333" stroke="#777"/><text x="1414" y="891.500" class="two">2</text></svg>
  <div class="desk"></div>
</footer>
</body>
</html>
```
FILE: styles.css
```css
* { box-sizing: border-box; }
body { margin: 0; width: 1440px; height: 900px; overflow: hidden; display: flex; flex-direction: column; background: #444; color: #e4e4e4; font: 12px/16px "Noto Sans", sans-serif; letter-spacing: -0.35px; white-space: nowrap; }
body > * { flex: none; }
svg { display: block; flex: none; }
.defs { position: absolute; }
.maxtag { font: bold 5px "Liberation Sans", sans-serif; fill: #14929a; letter-spacing: 0; }

.title { height: 23px; background: #fff; color: #000; display: flex; align-items: flex-start; }
.app-ico { margin: 3px 5px 0 3px; }
.title-text { margin-top: 4px; letter-spacing: -0.47px; }
.win-btns { margin: 0 15px 0 auto; }

.menu { height: 23px; display: grid; grid-template-columns: 43px 48px 54px 59px 58px 62px 73px 80px 99px 81px 76px 81px 73px 71px 61px 65px 120px 1fr; padding-left: 13px; background: linear-gradient(#555, #454545); border-bottom: 1px solid #0c0c0c; line-height: 22px; color: #f0f0f0; }
.signin { background: #cfcfcf; color: #1a1a1a; display: flex; align-items: center; padding: 0 4px 0 5px; }
.signin b { font-weight: 400; margin-left: 5px; margin-right: auto; letter-spacing: -0.1px; }
.ws { display: flex; padding-left: 19px; line-height: 24px; color: #ccc; }
.ws > span { width: 67px; letter-spacing: -0.3px; font-size: 11px; }
.combo { background: #646464; border: 1px solid #505050; color: #dadada; display: flex; justify-content: space-between; align-items: center; padding: 0 5px; height: 21px; line-height: 16px; }
.combo i { border: 3.5px solid transparent; border-top: 5px solid #e0e0e0; border-bottom: 0; }
.ws-combo { width: 134px; height: 22px; background: #585858; font-size: 11px; padding: 2px 5px 0 3px; letter-spacing: -0.2px; }

.toolbar { height: 33px; display: flex; }
.grip { width: 9px; padding: 3px 3px; background: repeating-linear-gradient(#999 0 1px, transparent 1px 2px) 0 0 / 1px 100% no-repeat, repeating-linear-gradient(#999 0 1px, transparent 1px 2px) 2px 0 / 1px 100% no-repeat; background-origin: content-box; background-clip: content-box; }
.ic { width: 32px; height: 32px; }
.ic.on { background: linear-gradient(#5b87c3, #5b87c3) 1px 2px / 30px 29px no-repeat; border-radius: 3px; }
.toolbar u { width: 6px; height: 16px; margin-top: 8px; background: linear-gradient(#141414, #141414) 3px 0 / 1px 16px no-repeat; }
.toolbar u.s5 { width: 5px; background-position-x: 2px; }
.c1 { width: 68px; height: 20px; margin: 4px 1px 0; font-size: 11px; }
.c1b { margin-right: 2px; }
.c2 { width: 118px; height: 20px; margin: 4px 2px 0 0; padding: 0 4px 0 3px; font-size: 11px; letter-spacing: -0.2px; }
.c2 + u { margin-left: -1px; }
.br { margin-left: 1px; }

.ribbon { height: 20px; display: flex; }
.rg { width: 9px; padding-right: 4px; padding-left: 2px; }
.rib { flex: 1; background: #525252; border: 1px solid #6a6a6a; border-bottom: 0; padding: 1px 0 0 3px; display: flex; align-items: center; color: #a8a8a8; letter-spacing: -0.1px; }
.rib .act { width: 81px; height: 16px; padding-left: 20px; background: linear-gradient(#6e6e6e, #4d4d4d); border: 1px solid #333; border-bottom: 0; color: #ddd; line-height: 14px; margin-top: 1px; }
.r2 { margin-left: 23px; width: 92px; } .r3 { width: 92px; } .r4 { width: 109px; } .r5 { width: 78px; }

.main { height: 653px; display: flex; padding-top: 4px; }
.left { width: 127px; display: flex; flex-direction: column; }
.ltabs { display: flex; height: 20px; gap: 2px; color: #a8a8a8; font-size: 11.5px; }
.lt { width: 66px; background: #3a3a3a; padding: 4px 0 0 9px; border-radius: 4px 4px 0 0; letter-spacing: -0.3px; }
.lt.on1 { width: 53px; padding: 3px 0 0 10px; background: #444; border: 1px solid #393939; border-bottom: 0; color: #eee; line-height: 14px; }
.dots { height: 3px; margin: 3px 6px 4px 2px; background: repeating-linear-gradient(90deg, #aaa 0 1px, transparent 1px 2px); -webkit-mask: linear-gradient(#000 1px, transparent 1px 2px, #000 2px); mask: linear-gradient(#000 1px, transparent 1px 2px, #000 2px); }
.strip { flex: 1; width: 40px; background: linear-gradient(90deg, #292929, #343434 85%, #292929); padding: 497px 0 1px 3px; }
.play { width: 21px; height: 21px; margin: 0 0 9px 6px; border-radius: 3px; background: #4d4d4d; border: 1px solid #222; display: flex; justify-content: center; align-items: center; }
.vp { height: 44px; margin-bottom: 1px; border-radius: 4px 0 0 4px; background: linear-gradient(#4d4d4d, #606060); border: 1px solid #272727; padding: 7px 1px 7px 3px; }
.vp.blue { background: linear-gradient(#52657f, #3e82dc); }
.vp div { height: 28px; border: 1px solid #242424; background: #ffffff0b; }
.vp.blue div { background: linear-gradient(#5a5f6c, #637288); }

.view { width: 1065px; height: 649px; border: 2px solid #7a652c; background: #363636; }
.vlabel { font: 11px "Noto Sans", sans-serif; fill: #d8d8d8; letter-spacing: 0; }
.dim { font: bold 13px "DejaVu Sans", sans-serif; fill: #245fae; letter-spacing: 0; }
.ax { font: 10px "DejaVu Sans Condensed", "DejaVu Sans", sans-serif; }
.cubet { font: bold 8px "Liberation Sans", sans-serif; fill: #4c4e53; letter-spacing: 0; }

.right { width: 248px; padding-left: 4px; display: flex; flex-direction: column; }
.rd { margin: 2px 3px 4px 2px; flex: none; }
.tabs { display: flex; height: 26px; }
.tabs svg { width: 32px; height: 27px; background: #383838; border: 1px solid #444; border-width: 0 1px; border-radius: 4px 4px 0 0; }
.tabs .cur { background: #444; border: 1px solid #393939; border-bottom: 0; z-index: 1; }
.panel { flex: 1; border: 1px solid #3a3a3a; margin-right: 1px; padding: 7px 3px 0 4px; position: relative; }
.nm { display: flex; justify-content: space-between; height: 20px; }
.name { width: 211px; background: #595959; border: 1px solid #3a3a3a; }
.swatch { width: 17px; background: #c7317f; border: 1px solid #222; margin-right: 1px; }
.mod { height: 21px; margin: 9px -1px 0 0; padding: 0 7px 0 2px; border-color: #3a3a3a; letter-spacing: -0.55px; }
.stack { height: 128px; margin: 4px -1px 0 0; border: 2px solid #f6f6f6; outline: 1px solid #777; outline-offset: -1px; }
.modicons { margin-top: 5px; }
.divide { display: flex; justify-content: space-between; align-items: center; padding: 0 5px 0 4px; height: 8px; margin-top: 13px; }
.divide s { width: 102px; height: 1px; background: #696969; }
.divide em { width: 13px; height: 3px; background: repeating-linear-gradient(90deg, #ddd 0 1px, #555 1px 2px); -webkit-mask: linear-gradient(#000 1px, transparent 1px 2px, #000 2px); mask: linear-gradient(#000 1px, transparent 1px 2px, #000 2px); }
.thumb { width: 6px; height: 371px; margin: 2px 0 0 auto; background: #3e3e3e; border-radius: 3px; }

.slider { height: 26px; display: flex; gap: 2px; padding: 5px 0 0 622px; }
.slider div { height: 16px; line-height: 17px; background: #646464; border-radius: 3px; text-align: center; letter-spacing: 0; font-size: 11.5px; }
.sb { width: 14px; } .sv { width: 123px; }
.slider .sv { letter-spacing: -0.4px; }
.track { height: 26px; display: flex; align-items: flex-end; }
.nums { font: 11px "Noto Sans", sans-serif; letter-spacing: -0.4px; fill: #bbb; text-anchor: middle; }

.status { height: 56px; display: flex; position: relative; }
.script { width: 99px; margin: 5px 0 0 4px; }
.script div { height: 22px; border: 1px solid #777; border-right: 2px solid #eee; border-bottom: 2px solid #eee; }
.pink { background: #dbc3c4; }
.script .listener { background: #fff; margin-top: 1px; height: 23px; color: #777; font: 12px/18px "Liberation Mono", monospace; letter-spacing: 0; padding: 0 4px; }
.listener span { display: block; width: 88px; overflow: hidden; }
.vline { width: 3px; height: 51px; margin: 3px 3px 0 2px; border: 1px solid #333; border-right-color: #0c0c0c; }
.msg { width: 431px; display: flex; flex-direction: column; gap: 9px; padding-top: 10px; color: #f2f2f2; font-size: 11.5px; letter-spacing: -0.55px; }
.none { letter-spacing: -0.5px; }
.coords { width: 444px; padding-top: 7px; }
.row { display: flex; align-items: center; height: 20px; color: #f2f2f2; font-size: 11.5px; }
.ax1, .ax2 { width: 14px; margin-left: 6px; }
.ax2 { margin-left: 12px; }
.fld { width: 58px; height: 18px; line-height: 18px; border: 1px solid #3c3c3c; background: #585858; color: #8a8a8a; padding-left: 3px; letter-spacing: -0.2px; font-size: 11.5px; }
.grid10 { margin-left: 14px; }
.row2 { margin-top: 4px; padding-left: 306px; height: 22px; }
.att { margin-left: 3px; color: #d5d5d5; letter-spacing: -0.6px; padding-top: 2px; }
.playback { width: 118px; padding-top: 2px; }
.prow { display: flex; }
.frame { width: 68px; height: 18px; margin-top: 2px; background: #646464; border: 1px solid #3a3a3a; display: flex; justify-content: space-between; align-items: center; padding: 0 2px; font-size: 11px; }
.bigkey { margin: 7px 0 0 13px; background: #646464; border-radius: 3px; }
.keys { margin: 7px 0 0 4px; width: 46px; }
.btn { height: 20px; line-height: 22px; margin-bottom: 2px; background: #646464; border-radius: 3px; text-align: center; color: #e0e0e0; font-size: 11.5px; }
.filt { margin: 7px 0 0 5px; width: 114px; }
.sel { height: 19px; font-size: 11.5px; letter-spacing: -0.3px; margin-bottom: 3px; border-color: #606060; padding-right: 6px; }
.kf { width: 88px; letter-spacing: -0.1px; margin-top: 1px; }
.navs { margin: 5px 0 0 11px; }
.ghost { position: absolute; left: 1039px; top: -8px; width: 206px; height: 22px; background: #5663760d; color: #25272b66; padding: 5px 0 0 33px; font-size: 11.5px; line-height: 14px; letter-spacing: 0; pointer-events: none; }

.task { height: 40px; background: #000; display: flex; }
.cell { width: 48px; height: 40px; }
.cell.wide { width: 49px; }
.cell.run { background: linear-gradient(#76b9ed, #76b9ed) 7px 38px / 40px 2px no-repeat; }
.folder { background: linear-gradient(#76b9ed, #76b9ed) 7px 38px / 32px 2px no-repeat, linear-gradient(#4f7ea3, #4f7ea3) 39px 38px / 8px 2px no-repeat; }
.maxc { margin-left: 3px; padding: 8px 0 0 12px; background: #333; border-bottom: 2px solid #76b9ed; }
.tray { margin-left: 610px; }
.clock { width: 64px; display: flex; flex-direction: column; align-items: center; padding-top: 2px; line-height: 18px; color: #fff; letter-spacing: -0.6px; }
.note { margin-left: 6px; }
.two { font: bold 11px "Noto Sans", sans-serif; fill: #fff; text-anchor: middle; }
.desk { width: 2px; margin-left: 8px; border-left: 1px solid #666; }
```
